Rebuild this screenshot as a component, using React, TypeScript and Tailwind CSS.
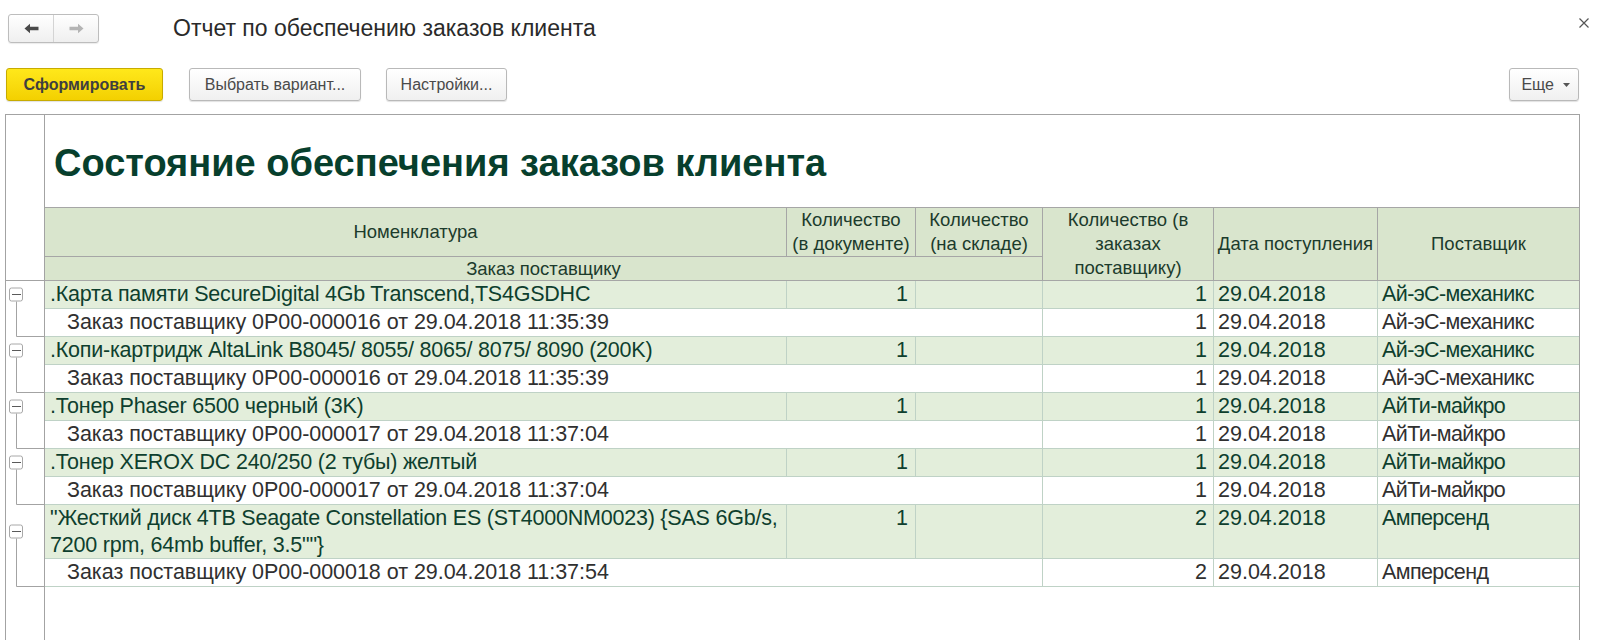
import React from "react";

type Group = {
  name: string[];
  inDoc: string;
  inOrders: string;
  date: string;
  supplier: string;
  order: string;
  tall?: boolean;
};

const groups: Group[] = [
  {
    name: [".Карта памяти SecureDigital 4Gb Transcend,TS4GSDHC"],
    inDoc: "1",
    inOrders: "1",
    date: "29.04.2018",
    supplier: "Ай-эС-механикс",
    order: "Заказ поставщику 0P00-000016 от 29.04.2018 11:35:39",
  },
  {
    name: [".Копи-картридж AltaLink B8045/ 8055/ 8065/ 8075/ 8090 (200K)"],
    inDoc: "1",
    inOrders: "1",
    date: "29.04.2018",
    supplier: "Ай-эС-механикс",
    order: "Заказ поставщику 0P00-000016 от 29.04.2018 11:35:39",
  },
  {
    name: [".Тонер Phaser 6500 черный (3K)"],
    inDoc: "1",
    inOrders: "1",
    date: "29.04.2018",
    supplier: "АйТи-майкро",
    order: "Заказ поставщику 0P00-000017 от 29.04.2018 11:37:04",
  },
  {
    name: [".Тонер XEROX DC 240/250 (2 тубы) желтый"],
    inDoc: "1",
    inOrders: "1",
    date: "29.04.2018",
    supplier: "АйТи-майкро",
    order: "Заказ поставщику 0P00-000017 от 29.04.2018 11:37:04",
  },
  {
    name: [
      "\"Жесткий диск 4TB Seagate Constellation ES (ST4000NM0023) {SAS 6Gb/s,",
      "7200 rpm, 64mb buffer, 3.5\"\"}",
    ],
    inDoc: "1",
    inOrders: "2",
    date: "29.04.2018",
    supplier: "Амперсенд",
    order: "Заказ поставщику 0P00-000018 от 29.04.2018 11:37:54",
    tall: true,
  },
];

const GROUP_H = 28;
const TALL_H = 54;
const DETAIL_H = 28;

function TreeBranch({ groupH, detailH }: { groupH: number; detailH: number }) {
  const h = groupH + detailH;
  const cy = (groupH - 1) / 2;
  return (
    <svg width="38" height={h} className="block">
      <line x1="10.5" y1={cy + 7} x2="10.5" y2={h - 0.5} stroke="#a3a3a3" />
      <line x1="10.5" y1={h - 0.5} x2="38" y2={h - 0.5} stroke="#a3a3a3" />
      <rect x="3.5" y={cy - 6.5} width="13" height="13" rx="2" fill="#ffffff" stroke="#a8a8a8" />
      <line x1="6" y1={cy} x2="15" y2={cy} stroke="#5a5a5a" />
    </svg>
  );
}

function BackArrow({ color }: { color: string }) {
  return (
    <svg width="15" height="11" viewBox="0 0 15 11">
      <path d="M0.5 5.5 L6 0.8 L6 3.8 L14.5 3.8 L14.5 7.2 L6 7.2 L6 10.2 Z" fill={color} />
    </svg>
  );
}

function ForwardArrow({ color }: { color: string }) {
  return (
    <svg width="15" height="11" viewBox="0 0 15 11">
      <path d="M14.5 5.5 L9 0.8 L9 3.8 L0.5 3.8 L0.5 7.2 L9 7.2 L9 10.2 Z" fill={color} />
    </svg>
  );
}

const cols = "grid grid-cols-[742px_129px_127px_171px_164px_1fr]";

export default function App() {
  return (
    <div className="w-[1599px] h-[640px] overflow-hidden bg-white flex flex-col font-['Liberation_Sans',Arial,sans-serif]">
      {/* window header */}
      <div className="h-[68px] shrink-0 flex items-start pt-[14px] pl-[8px] pr-[9px]">
        <div className="h-[29px] w-[91px] flex rounded-[3px] border border-[#bdbdbd] bg-gradient-to-b from-white to-[#efefef] shadow-[0_1px_1px_rgba(0,0,0,0.08)]">
          <div className="w-[45px] flex items-center justify-center border-r border-[#d4d4d4]">
            <BackArrow color="#4a4a4a" />
          </div>
          <div className="flex-1 flex items-center justify-center">
            <ForwardArrow color="#b4b4b4" />
          </div>
        </div>
        <div className="ml-[74px] h-[29px] leading-[29px] text-[23px] text-[#2a2a2a] whitespace-nowrap">
          Отчет по обеспечению заказов клиента
        </div>
        <div className="ml-auto mt-[3px] w-[12px] h-[12px] flex items-center justify-center">
          <svg width="10" height="10" viewBox="0 0 10 10">
            <path d="M0.5 0.5 L9.5 9.5 M9.5 0.5 L0.5 9.5" stroke="#555555" strokeWidth="1.2" />
          </svg>
        </div>
      </div>

      {/* command bar */}
      <div className="h-[33px] shrink-0 flex items-stretch pl-[6px] pr-[20px]">
        <button className="w-[157px] rounded-[3px] border border-[#c7ab00] bg-gradient-to-b from-[#ffe81a] to-[#f3d000] text-[16px] font-bold text-[#3f3f3f] shadow-[0_1px_1px_rgba(0,0,0,0.12)]">
          Сформировать
        </button>
        <button className="ml-[26px] w-[172px] rounded-[3px] border border-[#b9b9b9] bg-gradient-to-b from-white to-[#f0f0f0] text-[16px] text-[#4a4a4a] shadow-[0_1px_1px_rgba(0,0,0,0.12)]">
          Выбрать вариант...
        </button>
        <button className="ml-[25px] w-[121px] rounded-[3px] border border-[#b9b9b9] bg-gradient-to-b from-white to-[#f0f0f0] text-[16px] text-[#4a4a4a] shadow-[0_1px_1px_rgba(0,0,0,0.12)]">
          Настройки...
        </button>
        <button className="ml-auto w-[70px] flex items-center justify-end pr-[8px] gap-[9px] rounded-[3px] border border-[#b9b9b9] bg-gradient-to-b from-white to-[#f0f0f0] text-[16px] text-[#4a4a4a] shadow-[0_1px_1px_rgba(0,0,0,0.12)]">
          <span>Еще</span>
          <svg width="7" height="4" viewBox="0 0 7 4">
            <path d="M0 0 L7 0 L3.5 4 Z" fill="#555555" />
          </svg>
        </button>
      </div>

      {/* report frame */}
      <div className="mt-[13px] ml-[5px] mr-[19px] flex-1 flex border-l border-t border-r border-[#a3a3a3]">
        {/* tree gutter */}
        <div className="w-[39px] shrink-0 border-r border-[#a3a3a3] flex flex-col">
          <div className="h-[166px] shrink-0 border-b border-[#a3a3a3]" />
          {groups.map((g, i) => (
            <TreeBranch key={i} groupH={g.tall ? TALL_H : GROUP_H} detailH={DETAIL_H} />
          ))}
        </div>

        {/* report body */}
        <div className="flex-1 flex flex-col min-w-0">
          <div className="h-[92px] shrink-0 flex items-center pl-[9px] pt-[4px]">
            <h1 className="text-[38px] font-bold text-[#073f2d] whitespace-nowrap leading-none">
              Состояние обеспечения заказов клиента
            </h1>
          </div>

          {/* column headers */}
          <div className={`${cols} grid-rows-[49px_24px] border-t border-[#a6a6a6] bg-[#d9e5cd] text-[18.5px] leading-[24px] text-[#1c3b2c] text-center`}>
            <div className="border-r border-b border-[#a6a6a6] flex items-center justify-center">Номенклатура</div>
            <div className="border-r border-b border-[#a6a6a6] flex items-center justify-center">
              Количество<br />(в документе)
            </div>
            <div className="border-r border-b border-[#a6a6a6] flex items-center justify-center">
              Количество<br />(на складе)
            </div>
            <div className="row-span-2 border-r border-b border-[#a6a6a6] flex items-center justify-center">
              Количество (в<br />заказах<br />поставщику)
            </div>
            <div className="row-span-2 border-r border-b border-[#a6a6a6] flex items-center justify-center whitespace-nowrap">
              Дата поступления
            </div>
            <div className="row-span-2 border-b border-[#a6a6a6] flex items-center justify-center">Поставщик</div>
            <div className="col-span-3 border-r border-b border-[#a6a6a6] flex items-center justify-center">
              Заказ поставщику
            </div>
          </div>

          {/* rows */}
          <div className="text-[21.5px] whitespace-nowrap">
            {groups.map((g, i) => (
              <React.Fragment key={i}>
                <div
                  className={`${cols} ${g.tall ? "h-[54px] leading-[26.5px]" : "h-[28px] leading-[27px]"} bg-[#e3eedb] text-[#0e3f2e] border-b border-[#bfd2c6]`}
                >
                  <div className="pl-[5px] border-r border-[#bfd2c6] overflow-hidden tracking-[-0.22px]">
                    {g.name.map((line, k) => (
                      <div key={k}>{line}</div>
                    ))}
                  </div>
                  <div className="pr-[7px] text-right border-r border-[#bfd2c6]">{g.inDoc}</div>
                  <div className="border-r border-[#bfd2c6]" />
                  <div className="pr-[6px] text-right border-r border-[#bfd2c6]">{g.inOrders}</div>
                  <div className="pl-[4px] border-r border-[#bfd2c6]">{g.date}</div>
                  <div className="pl-[4px] tracking-[-0.6px]">{g.supplier}</div>
                </div>
                <div className={`${cols} h-[28px] leading-[27px] text-[#303030] border-b border-[#bfd2c6]`}>
                  <div className="col-span-3 pl-[22px] border-r border-[#bfd2c6] tracking-[-0.04px]">{g.order}</div>
                  <div className="pr-[6px] text-right border-r border-[#bfd2c6]">{g.inOrders}</div>
                  <div className="pl-[4px] border-r border-[#bfd2c6]">{g.date}</div>
                  <div className="pl-[4px] tracking-[-0.6px]">{g.supplier}</div>
                </div>
              </React.Fragment>
            ))}
          </div>
        </div>
      </div>
    </div>
  );
}
